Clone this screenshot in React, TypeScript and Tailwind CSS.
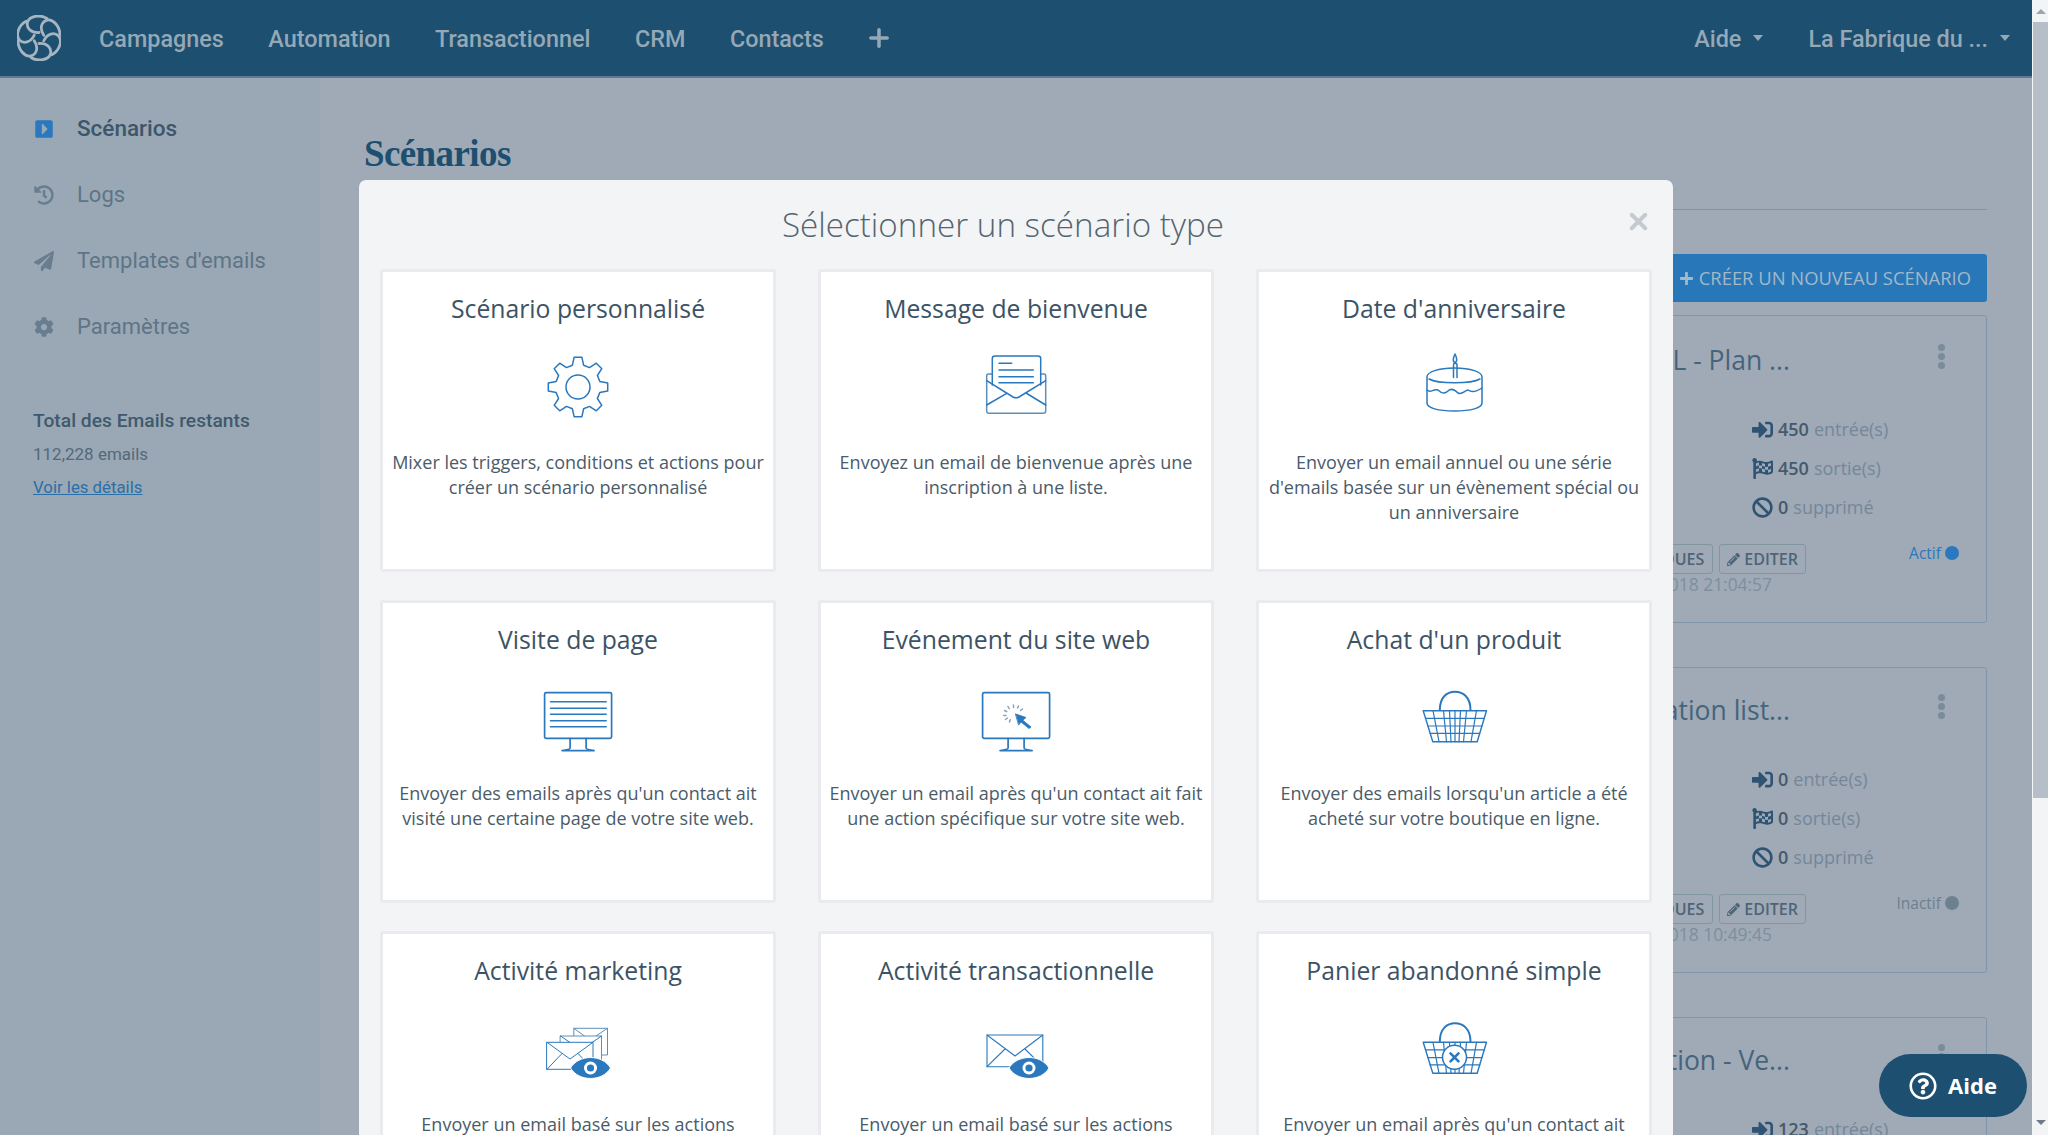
import { Plus, X } from 'lucide-react';
import {
  FaBan,
  FaCaretSquareRight,
  FaCog,
  FaFlagCheckered,
  FaHistory,
  FaPaperPlane,
  FaPencilAlt,
  FaPlus,
  FaRegQuestionCircle,
  FaSignInAlt,
} from 'react-icons/fa';
import type { ReactNode } from 'react';

const BLUE = '#2a78bd';

function Logo() {
  return (
    <svg width="44" height="46" viewBox="-22 -23 44 46" fill="none" stroke="#a6b5c1" strokeWidth="2.8">
      {[0, 60, 120, 180, 240, 300].map((a) => (
        <path key={a} transform={`rotate(${a})`} d="M0 -5.5 C-8 -5 -13 -10 -11.5 -16 C-9.5 -22 1 -24 8 -19.5" strokeLinecap="round" />
      ))}
    </svg>
  );
}

function IconSvg({ children }: { children: ReactNode }) {
  return (
    <svg width="72" height="72" viewBox="0 0 72 72" fill="none" stroke={BLUE} strokeWidth="1.5" strokeLinejoin="round" strokeLinecap="round">
      {children}
    </svg>
  );
}

function gearPath() {
  const cx = 36;
  const cy = 37;
  const pts: string[] = [];
  for (let i = 0; i < 8; i++) {
    const a = (i * Math.PI) / 4 - Math.PI / 2;
    const p = (r: number, d: number) => `${(cx + r * Math.cos(a + d)).toFixed(1)} ${(cy + r * Math.sin(a + d)).toFixed(1)}`;
    pts.push(`${i === 0 ? 'M' : 'L'}${p(22.5, -0.25)} L${p(30, -0.13)} L${p(30, 0.13)} L${p(22.5, 0.25)}`);
  }
  return pts.join(' ') + ' Z';
}

function GearIcon() {
  return (
    <IconSvg>
      <path d={gearPath()} />
      <circle cx="36" cy="37" r="12" />
    </IconSvg>
  );
}

function OpenMailIcon() {
  return (
    <IconSvg>
      <path d="M12.3 24 L8.5 24 Q6.7 24 6.7 26 V61 Q6.7 63.3 9 63.3 H63.5 Q65.7 63.3 65.7 61 V26 Q65.7 24 64 24 L60.7 24" stroke="#5f8fb8" />
      <path d="M12.3 35 V8.5 Q12.3 6 15 6 H58 Q60.7 6 60.7 8.5 V35" />
      <path d="M6.7 30.7 L33 47 Q36 48.6 39 47 L65.7 30.7" />
      <path d="M6.7 55 L26.7 43.3 M65.7 55 L46 43" />
      <path d="M19 13.3 H31.7 M19 20 H53.3 M19 26.7 H53.3 M19 32.7 H53.3" />
    </IconSvg>
  );
}

function CakeIcon() {
  return (
    <IconSvg>
      <path d="M9 27 C9 22 20 18 36.5 18 C53 18 64 22 64 27 V53 C64 58 53 61 36.5 61 C20 61 9 58 9 53 Z" />
      <path d="M11 29 C20 34 53 34 62 29" />
      <path d="M9 40 C13 44 15 38 20 40 C24 44 27 44 30 41 C33 38 36 39 40 43 C44 45 46 41 50 40 C54 43 58 42 64 38" />
      <path d="M35.5 27.5 V15 Q35.5 13.3 37 13.3 Q39 13.3 39 15 V27.5" />
      <path d="M37 4 C35 8 34.5 12 37 12.5 C39.5 12 39 8 37 4 Z" />
    </IconSvg>
  );
}

function Monitor({ children, left = 2.6, right = 69.6 }: { children?: ReactNode; left?: number; right?: number }) {
  const w = right - left;
  const cx = left + w / 2;
  return (
    <IconSvg>
      <rect x={left} y="11.7" width={w} height="45.6" rx="1.6" strokeWidth="1.7" />
      <path d={`M${cx - 8} 57.3 V67 Q${cx - 8} 68.6 ${cx - 16} 69.6 H${cx + 16} Q${cx + 8} 68.6 ${cx + 8} 67 V57.3`} strokeWidth="1.7" />
      {children}
    </IconSvg>
  );
}

function PageIcon() {
  return (
    <Monitor>
      <path d="M8.5 20.7 H64.2 M8.5 27.3 H64.2 M8.5 33.3 H64.2 M8.5 39.7 H64.2 M8.5 45.7 H64.2" strokeWidth="1.6" />
    </Monitor>
  );
}

function CursorIcon() {
  return (
    <Monitor>
      <path d="M33.5 24 V26.5 M28 25.5 L29.2 27.6 M24.6 29.5 L26.7 30.7 M23.6 34.5 H26 M25.5 38.5 L27.4 37 M29.5 41 L30.3 38.8 M38.5 25 L37.6 27 M42.5 28 L40.5 29.5" stroke="#8aa3b8" />
      <path d="M35.7 33 L46 36.5 L42.8 39.2 L51 46 L49 47.5 L41 41 L38.8 43.8 Z" fill={BLUE} stroke={BLUE} strokeWidth="0.8" />
    </Monitor>
  );
}

function BasketLines({ y }: { y: number }) {
  return (
    <>
      <path d={`M21.8 ${y + 29} C21.8 ${y + 16} 29 ${y + 10.7} 37 ${y + 10.7} C45 ${y + 10.7} 52.5 ${y + 16} 52.5 ${y + 29}`} strokeWidth="2" />
      <path d={`M5.2 ${y + 29.7} H68.5 L59.2 ${y + 60.7} H14.8 Z`} strokeWidth="1.4" />
      <path
        d={`M7.5 ${y + 37.3} H66.2 M9.8 ${y + 45} H64 M12 ${y + 52.3} H61.8 M15 ${y + 29.7} L21 ${y + 60.7} M25.5 ${y + 29.7} L28.5 ${y + 60.7} M31.5 ${y + 29.7} L33 ${y + 60.7} M37 ${y + 29.7} V${y + 60.7} M42.5 ${y + 29.7} L41 ${y + 60.7} M48.5 ${y + 29.7} L45.5 ${y + 60.7} M58.5 ${y + 29.7} L53 ${y + 60.7}`}
        strokeWidth="1.2"
      />
    </>
  );
}

function BasketIcon() {
  return (
    <IconSvg>
      <BasketLines y={0} />
    </IconSvg>
  );
}

function AbandonedIcon() {
  return (
    <IconSvg>
      <BasketLines y={0.6} />
      <circle cx="36.5" cy="45.3" r="12" fill="#fff" />
      <path d="M32.5 41.3 L40.5 49.3 M40.5 41.3 L32.5 49.3" strokeWidth="2.6" />
    </IconSvg>
  );
}

function Eye({ cx }: { cx: number }) {
  return (
    <g>
      <path d={`M${cx - 20} 56 C${cx - 12} 42 ${cx + 12} 42 ${cx + 20} 56 C${cx + 12} 70 ${cx - 12} 70 ${cx - 20} 56 Z`} fill={BLUE} stroke="#fff" strokeWidth="1" />
      <circle cx={cx} cy="56" r="6.5" fill="#fff" stroke="none" />
      <circle cx={cx} cy="56" r="3.6" fill={BLUE} stroke="none" />
    </g>
  );
}

function MarketingIcon() {
  return (
    <IconSvg>
      <g strokeWidth="1">
        <path d="M31.8 24 V16.3 H65.5 V43 H60 M31.8 16.3 L48 28 L65.5 16.3" stroke="#5f8fb8" />
        <rect x="18.5" y="24" width="41" height="26" fill="#fff" stroke="#5f8fb8" />
        <path d="M18.5 24 L39 38 L59.5 24" />
        <rect x="5" y="30.3" width="46" height="27" fill="#fff" />
        <path d="M5 30.3 L28 47 L51 30.3 M5 57.3 L20 41.5 M51 57.3 L36 41.5" />
      </g>
      <Eye cx={48.5} />
    </IconSvg>
  );
}

function TransacIcon() {
  return (
    <IconSvg>
      <g strokeWidth="1.1">
        <rect x="7" y="23" width="55.8" height="31.7" />
        <path d="M7 23 L35 44 L62.8 23 M7 54.7 L25 37 M62.8 54.7 L45 37" />
      </g>
      <Eye cx={49} />
    </IconSvg>
  );
}

const scenarioTypes = [
  { title: 'Scénario personnalisé', icon: <GearIcon />, text: 'Mixer les triggers, conditions et actions pour créer un scénario personnalisé' },
  { title: 'Message de bienvenue', icon: <OpenMailIcon />, text: 'Envoyez un email de bienvenue après une inscription à une liste.' },
  { title: "Date d'anniversaire", icon: <CakeIcon />, text: "Envoyer un email annuel ou une série d'emails basée sur un évènement spécial ou un anniversaire" },
  { title: 'Visite de page', icon: <PageIcon />, text: "Envoyer des emails après qu'un contact ait visité une certaine page de votre site web." },
  { title: 'Evénement du site web', icon: <CursorIcon />, text: "Envoyer un email après qu'un contact ait fait une action spécifique sur votre site web." },
  { title: "Achat d'un produit", icon: <BasketIcon />, text: "Envoyer des emails lorsqu'un article a été acheté sur votre boutique en ligne." },
  { title: 'Activité marketing', icon: <MarketingIcon />, text: 'Envoyer un email basé sur les actions effectuées dans vos campagnes.' },
  { title: 'Activité transactionnelle', icon: <TransacIcon />, text: 'Envoyer un email basé sur les actions effectuées dans vos emails.' },
  { title: 'Panier abandonné simple', icon: <AbandonedIcon />, text: "Envoyer un email après qu'un contact ait abandonné son panier." },
];

function TypeCard({ title, icon, text }: { title: string; icon: ReactNode; text: string }) {
  return (
    <div className="h-[303px] bg-white border-[3px] border-[#e9ebee] rounded-[3px] flex flex-col items-center px-[6px] text-center">
      <h3 className="mt-[19px] h-[36px] leading-[36px] text-[24.75px] text-[#3c5365]">{title}</h3>
      <div className="mt-[23px] h-[72px]">{icon}</div>
      <p className="mt-[28px] text-[18px] leading-[25px] text-[#4a5b69]">{text}</p>
    </div>
  );
}

function SideItem({ icon, label, active }: { icon: ReactNode; label: string; active?: boolean }) {
  return (
    <div className="h-[66px] flex items-center gap-[23px] pl-[34px]">
      <span className={active ? 'w-[20px] text-[20px] text-[#2a78bd]' : 'w-[20px] text-[20px] text-[#687d8f]'}>{icon}</span>
      <span className={active ? 'text-[22.5px] font-medium text-[#3d566b]' : 'text-[22px] text-[#5f7486]'}>{label}</span>
    </div>
  );
}

function Caret() {
  return <span className="inline-block ml-[12px] mb-[3px] border-x-[5px] border-x-transparent border-t-[6px] border-t-[#95a8b6]" />;
}

function Stat({ icon, value, label }: { icon: ReactNode; value: string; label: string }) {
  return (
    <div className="h-[39px] flex items-center gap-[5px] text-[18px]">
      <span className="text-[21px] text-[#2f5473]">{icon}</span>
      <span className="font-semibold text-[#46596c]">{value}</span>
      <span className="text-[#74879a]">{label}</span>
    </div>
  );
}

function ScenarioCard({ title, stats, date, status, active, shape }: { title: string; stats: string[]; date: string; status: string; active?: boolean; shape: string }) {
  return (
    <div className={`shrink-0 w-[620px] ml-auto border border-[#7f96a8] rounded-[3px] overflow-hidden ${shape}`}>
      <div className="flex justify-end items-center gap-[148px] pr-[41px] h-[36px]">
        <span className="text-[26.5px] text-[#46647b] -mt-[3px]">{title}</span>
        <span className="flex flex-col gap-[2px] w-[7px] -mt-[12px]">
          <i className="block w-[7px] h-[7px] rounded-full bg-[#7a8b9a]" />
          <i className="block w-[7px] h-[7px] rounded-full bg-[#7a8b9a]" />
          <i className="block w-[7px] h-[7px] rounded-full bg-[#7a8b9a]" />
        </span>
      </div>
      <div className="ml-auto w-[234px] mt-[30px]">
        <Stat icon={<FaSignInAlt />} value={stats[0]} label="entrée(s)" />
        <Stat icon={<FaFlagCheckered />} value={stats[1]} label="sortie(s)" />
        <Stat icon={<FaBan />} value="0" label="supprimé" />
      </div>
      <div className="flex justify-end mt-[17px] pr-[27px]">
        <span className="h-[30px] px-[8px] flex items-center border border-[#82969f] rounded-[3px] text-[16px] font-semibold text-[#4e6477]">STATISTIQUES</span>
        <span className="h-[30px] ml-[6px] px-[7px] flex items-center gap-[4px] border border-[#82969f] rounded-[3px] text-[16px] font-semibold text-[#4e6477]">
          <FaPencilAlt className="text-[13px]" />
          EDITER
        </span>
        <span className={active ? 'w-[153px] -mt-[2px] flex items-start justify-end gap-[4px] text-[15.5px] text-[#2a78bd]' : 'w-[153px] -mt-[2px] flex items-start justify-end gap-[4px] text-[15.5px] text-[#6d8090]'}>
          {status}
          <i className={active ? 'mt-[4px] block w-[14px] h-[14px] rounded-full bg-[#2a78bd]' : 'mt-[4px] block w-[14px] h-[14px] rounded-full bg-[#6d8090]'} />
        </span>
      </div>
      <div className="-mt-[2px] text-right pr-[214px] text-[17.4px] leading-[24px] text-[#7d8f9e]">{date}</div>
    </div>
  );
}

export default function App() {
  return (
    <div className="relative w-[2048px] h-[1135px] flex overflow-hidden font-['Open_Sans',sans-serif] bg-[#9faab6]">
      <div className="flex-1 flex flex-col min-w-0">
        {/* Header */}
        <header className="h-[78px] shrink-0 bg-[#1c4f70] border-b-2 border-b-[#5d7a90] flex items-center pl-[17px] pr-[22px] font-['Roboto',sans-serif] text-[23.4px] font-medium text-[#95a8b6]">
          <Logo />
          <nav className="ml-[38px] mt-[3px] flex items-center gap-[44.5px]">
            <span>Campagnes</span>
            <span>Automation</span>
            <span>Transactionnel</span>
            <span>CRM</span>
            <span>Contacts</span>
            <Plus size={28} strokeWidth={3} className="-ml-[3px] -mt-[2px]" />
          </nav>
          <div className="ml-auto mt-[3px] flex items-center">
            <span>Aide</span>
            <Caret />
            <span className="ml-[45px]">La Fabrique du ...</span>
            <Caret />
          </div>
        </header>

        <div className="flex-1 flex min-h-0">
          {/* Sidebar */}
          <aside className="w-[320px] shrink-0 bg-[#99a8b4] pt-[17.5px] font-['Roboto',sans-serif]">
            <SideItem active icon={<FaCaretSquareRight />} label="Scénarios" />
            <SideItem icon={<FaHistory />} label="Logs" />
            <SideItem icon={<FaPaperPlane />} label="Templates d'emails" />
            <SideItem icon={<FaCog />} label="Paramètres" />
            <div className="pl-[33px] mt-[49.5px]">
              <div className="text-[19.25px] leading-[24px] font-medium text-[#41596d]">Total des Emails restants</div>
              <div className="mt-[9px] text-[17px] leading-[24px] text-[#55697b]">112,228 emails</div>
              <div className="mt-[9px] text-[16.8px] leading-[24px] text-[#2a6fa8] underline">Voir les détails</div>
            </div>
          </aside>

          {/* Main */}
          <main className="flex-1 min-w-0 flex flex-col pl-[44px] pr-[45px] overflow-hidden">
            <h1 className="mt-[54px] h-[44px] leading-[44px] font-['Liberation_Serif',serif] text-[37px] font-bold tracking-[-0.6px] text-[#1c4f70]">Scénarios</h1>
            <hr className="mt-[33px] border-t border-[#7f95a6]" />
            <div className="mt-[44px] flex justify-end">
              <span className="h-[48px] pl-[20px] pr-[16px] flex items-center gap-[5px] rounded-[3px] bg-[#2877b9] text-[18.4px] text-[#a3b8c8]">
                <FaPlus className="text-[15px]" />
                CRÉER UN NOUVEAU SCÉNARIO
              </span>
            </div>
            <div className="mt-[13px] flex flex-col gap-[44px]">
              <ScenarioCard shape="h-[308px] pt-[28px]" title="WELCOME MAIL - Plan ..." stats={['450', '450']} date="12/04/2018 21:04:57" status="Actif" active />
              <ScenarioCard shape="h-[306px] pt-[26px]" title="Test automation list..." stats={['0', '0']} date="09/03/2018 10:49:45" status="Inactif" />
              <ScenarioCard shape="h-[306px] pt-[26px]" title="Confirmation - Ve..." stats={['123', '0']} date="02/03/2018 16:12:10" status="Actif" active />
            </div>
          </main>
        </div>
      </div>

      {/* Scrollbar */}
      <div className="w-[16px] shrink-0 flex flex-col bg-[#f3f4f6] border-l border-l-[#f5f6f7]">
        <div className="h-[22px] flex items-center justify-center">
          <span className="border-x-[5px] border-x-transparent border-b-[5px] border-b-[#9aa5ae]" />
        </div>
        <div className="h-[776px] bg-[#b6bfc7]" />
        <div className="mt-auto mb-[10px] flex justify-center">
          <span className="border-x-[5px] border-x-transparent border-t-[5px] border-t-[#6f7c88]" />
        </div>
      </div>

      {/* Modal */}
      <div className="absolute left-[359px] top-[180px] w-[1314px] bg-[#f3f4f6] rounded-t-[7px] px-[21px] pb-[30px]">
        <div className="relative h-[89px] flex items-center justify-center pr-[26px]">
          <h2 className="text-[33.2px] font-light text-[#55656f]">Sélectionner un scénario type</h2>
          <X size={27} strokeWidth={3.5} className="absolute right-0 top-[28px] text-[#c4cad0]" />
        </div>
        <div className="grid grid-cols-3 gap-x-[42px] gap-y-[28px]">
          {scenarioTypes.map((s) => (
            <TypeCard key={s.title} title={s.title} icon={s.icon} text={s.text} />
          ))}
        </div>
      </div>

      {/* Help pill */}
      <div className="absolute left-[1879px] top-[1054px] w-[148px] h-[63px] rounded-full bg-[#1c4f70] flex items-center justify-center gap-[11px] text-white">
        <FaRegQuestionCircle className="text-[28px]" />
        <span className="text-[22px] font-bold">Aide</span>
      </div>
    </div>
  );
}
